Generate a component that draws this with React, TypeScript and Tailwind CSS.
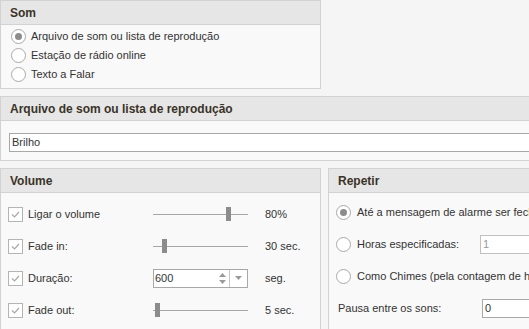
import React from 'react'

function Radio({ checked }: { checked?: boolean }) {
  return (
    <span className="w-[15px] h-[15px] rounded-full border border-[#a9a9a9] bg-white flex items-center justify-center shrink-0">
      {checked && <span className="w-[7px] h-[7px] rounded-full bg-[#8c8c8c]" />}
    </span>
  )
}

function Check() {
  return (
    <span className="w-[15px] h-[15px] border border-[#b4b4b4] bg-white flex items-center justify-center shrink-0">
      <svg width="11" height="11" viewBox="0 0 11 11">
        <path d="M2 5.5 L4.5 8 L9 3" fill="none" stroke="#a8a8a8" strokeWidth="1.2" />
      </svg>
    </span>
  )
}

function Slider({ pos }: { pos: number }) {
  return (
    <div className="relative w-[95px] h-[16px] flex items-center">
      <div className="w-full h-px bg-[#a6a6a6]" />
      <div className="absolute top-px w-[5px] h-[14px] bg-[#8c8c8c]" style={{ left: pos }} />
    </div>
  )
}

function Header({ children }: { children: React.ReactNode }) {
  return (
    <div className="h-[24px] bg-[#e6e6e6] border-b border-[#d2d2d2] flex items-center px-[9px] text-[12px] font-bold text-[#3a3328]">
      {children}
    </div>
  )
}

export default function App() {
  return (
    <div
      className="w-[529px] h-[329px] overflow-hidden bg-[#f5f5f5] text-[11px] text-[#333]"
      style={{ fontFamily: '"Liberation Sans", Arial, sans-serif' }}
    >
      <div className="flex flex-col gap-[7px]">
        <div className="w-[321px] h-[89px] border border-[#d2d2d2] bg-[#f9f9f9]">
          <Header>Som</Header>
          <div className="pt-[2px] pl-[10px]">
            <div className="h-[19px] flex items-center gap-[5px]">
              <Radio checked />
              <span>Arquivo de som ou lista de reprodução</span>
            </div>
            <div className="h-[19px] flex items-center gap-[5px]">
              <Radio />
              <span>Estação de rádio online</span>
            </div>
            <div className="h-[19px] flex items-center gap-[5px]">
              <Radio />
              <span>Texto a Falar</span>
            </div>
          </div>
        </div>

        <div className="w-[560px] h-[65px] border border-[#d2d2d2] bg-[#f9f9f9]">
          <Header>Arquivo de som ou lista de reprodução</Header>
          <div className="pt-[12px] pl-[8px]">
            <div className="h-[19px] w-[540px] border border-[#a8a8a8] bg-white flex items-center px-[2px]">Brilho</div>
          </div>
        </div>

        <div className="flex gap-[7px]">
          <div className="w-[321px] h-[162px] border border-[#d2d2d2] bg-[#f9f9f9] shrink-0">
            <Header>Volume</Header>
            <div className="pt-[5px] pl-[7px]">
              <div className="h-[32px] flex items-center">
                <Check />
                <span className="ml-[5px] w-[125px]">Ligar o volume</span>
                <Slider pos={73} />
                <span className="ml-[17px]">80%</span>
              </div>
              <div className="h-[32px] flex items-center">
                <Check />
                <span className="ml-[5px] w-[125px]">Fade in:</span>
                <Slider pos={9} />
                <span className="ml-[17px]">30 sec.</span>
              </div>
              <div className="h-[32px] flex items-center">
                <Check />
                <span className="ml-[5px] w-[125px]">Duração:</span>
                <div className="w-[95px] h-[19px] border border-[#a8a8a8] bg-white flex">
                  <span className="flex-1 pl-[1px] leading-[17px]">600</span>
                  <div className="w-[14px] flex flex-col items-center justify-center gap-[3px]">
                    <svg width="7" height="4" viewBox="0 0 7 4"><path d="M0 4 L3.5 0 L7 4Z" fill="#9a9a9a" /></svg>
                    <svg width="7" height="4" viewBox="0 0 7 4"><path d="M0 0 L3.5 4 L7 0Z" fill="#9a9a9a" /></svg>
                  </div>
                  <div className="w-[18px] border-l border-[#c8c8c8] flex items-center justify-center">
                    <svg width="7" height="4" viewBox="0 0 7 4"><path d="M0 0 L3.5 4 L7 0Z" fill="#9a9a9a" /></svg>
                  </div>
                </div>
                <span className="ml-[17px]">seg.</span>
              </div>
              <div className="h-[32px] flex items-center">
                <Check />
                <span className="ml-[5px] w-[125px]">Fade out:</span>
                <Slider pos={2} />
                <span className="ml-[17px]">5 sec.</span>
              </div>
            </div>
          </div>

          <div className="w-[240px] h-[162px] border border-[#d2d2d2] bg-[#f9f9f9] shrink-0">
            <Header>Repetir</Header>
            <div className="pt-[3px] pl-[7px] whitespace-nowrap">
              <div className="h-[32px] flex items-center gap-[6px]">
                <Radio checked />
                <span>Até a mensagem de alarme ser fechada</span>
              </div>
              <div className="h-[32px] flex items-center">
                <Radio />
                <span className="ml-[6px] w-[123px]">Horas especificadas:</span>
                <div className="h-[19px] w-[80px] border border-[#c0c0c0] bg-white px-[2px] leading-[17px] text-[#999]">1</div>
              </div>
              <div className="h-[32px] flex items-center gap-[6px]">
                <Radio />
                <span>Como Chimes (pela contagem de horas)</span>
              </div>
              <div className="h-[32px] flex items-center">
                <span className="pl-[2px] w-[146px]">Pausa entre os sons:</span>
                <div className="h-[19px] w-[80px] border border-[#a8a8a8] bg-white px-[2px] leading-[17px]">0</div>
              </div>
            </div>
          </div>
        </div>
      </div>
    </div>
  )
}
